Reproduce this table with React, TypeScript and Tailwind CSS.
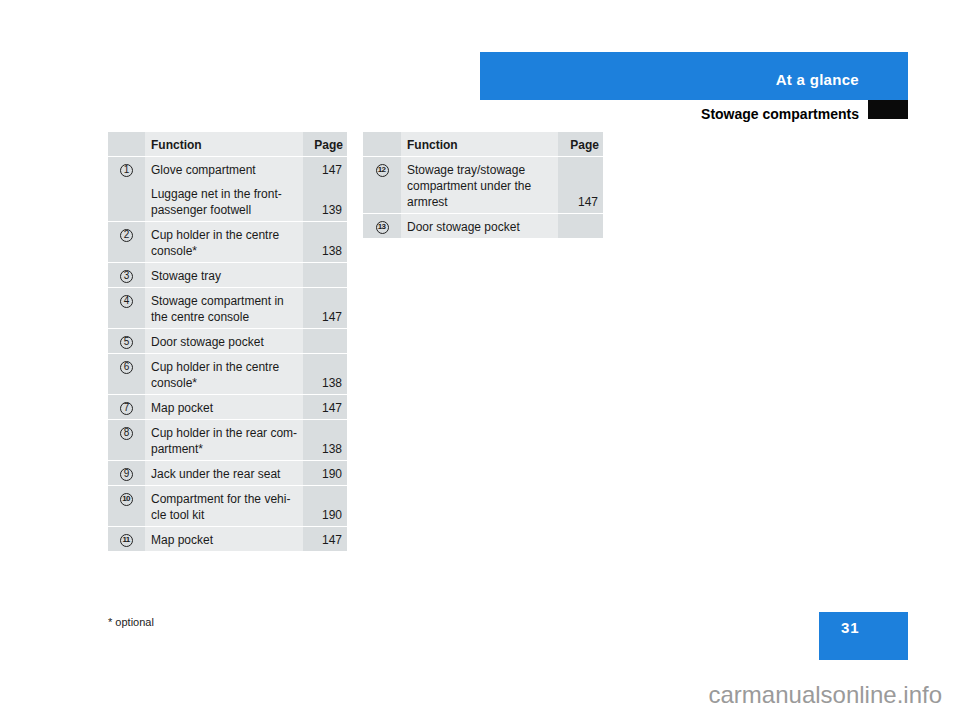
import React from "react";

type Entry = { text: string[]; page?: string };
type Row = { n: string; entries: Entry[] };

const left: Row[] = [
  { n: "1", entries: [{ text: ["Glove compartment"], page: "147" }, { text: ["Luggage net in the front-", "passenger footwell"], page: "139" }] },
  { n: "2", entries: [{ text: ["Cup holder in the centre", "console*"], page: "138" }] },
  { n: "3", entries: [{ text: ["Stowage tray"] }] },
  { n: "4", entries: [{ text: ["Stowage compartment in", "the centre console"], page: "147" }] },
  { n: "5", entries: [{ text: ["Door stowage pocket"] }] },
  { n: "6", entries: [{ text: ["Cup holder in the centre", "console*"], page: "138" }] },
  { n: "7", entries: [{ text: ["Map pocket"], page: "147" }] },
  { n: "8", entries: [{ text: ["Cup holder in the rear com-", "partment*"], page: "138" }] },
  { n: "9", entries: [{ text: ["Jack under the rear seat"], page: "190" }] },
  { n: "10", entries: [{ text: ["Compartment for the vehi-", "cle tool kit"], page: "190" }] },
  { n: "11", entries: [{ text: ["Map pocket"], page: "147" }] },
];

const right: Row[] = [
  { n: "12", entries: [{ text: ["Stowage tray/stowage", "compartment under the", "armrest"], page: "147" }] },
  { n: "13", entries: [{ text: ["Door stowage pocket"] }] },
];

function Circle({ n }: { n: string }) {
  const two = n.length > 1;
  return (
    <div className="w-[13px] h-[13px] rounded-full border border-[#222] flex items-center justify-center">
      <span className={two ? "text-[8px] leading-none tracking-[-0.8px] pr-[1px] font-bold" : "text-[10px] leading-none"}>{n}</span>
    </div>
  );
}

function Table({ rows, w }: { rows: Row[]; w: [string, string] }) {
  const [nw, pw] = w;
  return (
    <div className="flex flex-col gap-[1px] bg-white">
      <div className="flex h-[24px]">
        <div className={`${nw} bg-[#d9dddf]`} />
        <div className="flex-1 bg-[#e9ebec] pl-[6px] pt-[5px] leading-[16px] font-bold">Function</div>
        <div className={`${pw} bg-[#d9dddf] pr-[4px] pt-[5px] leading-[16px] text-right font-bold`}>Page</div>
      </div>
      {rows.map((r) => (
        <div key={r.n} className="flex">
          <div className={`${nw} bg-[#d9dddf] pt-[5px] flex justify-center`}>
            <div className="h-[16px] flex items-center">
              <Circle n={r.n} />
            </div>
          </div>
          <div className="flex-1 flex flex-col">
            {r.entries.map((e, i) => (
              <div key={i} className="flex flex-1">
                <div className={`flex-1 bg-[#e9ebec] pl-[6px] ${i === 0 ? "pt-[5px]" : "pt-[8px]"} ${i === r.entries.length - 1 ? "pb-[3px]" : ""}`}>
                  {e.text.map((t, j) => (
                    <div key={j} className="leading-[16px] whitespace-nowrap">{t}</div>
                  ))}
                </div>
                <div className={`${pw} bg-[#d9dddf] pr-[5px] flex items-end justify-end ${i === r.entries.length - 1 ? "pb-[3px]" : ""}`}>
                  <div className="leading-[16px]">{e.page ?? ""}</div>
                </div>
              </div>
            ))}
          </div>
        </div>
      ))}
    </div>
  );
}

export default function App() {
  return (
    <div className="w-[960px] h-[712px] bg-white overflow-hidden flex flex-col font-['Liberation_Sans',Arial,sans-serif] text-[#1a1a1a]">
      <div className="pt-[52px] pl-[480px]">
        <div className="w-[428px] h-[48px] bg-[#1d80dc] flex items-center justify-end pr-[49px] pt-[8px] text-white font-bold text-[15px] tracking-[0.3px]">
          At a glance
        </div>
      </div>
      <div className="flex justify-end items-start pr-[52px] h-[24px]">
        <div className="text-[14px] font-bold leading-[19px] pt-[5px] text-black">Stowage compartments</div>
        <div className="w-[40px] h-[19px] bg-[#0a0a0a] ml-[9px]" />
      </div>
      <div className="h-[488px] pt-[8px] pl-[108px] flex items-start gap-[16px] text-[12px]">
        <div className="w-[239px]">
          <Table rows={left} w={["w-[37px]", "w-[44px]"]} />
        </div>
        <div className="w-[240px]">
          <Table rows={right} w={["w-[38px]", "w-[45px]"]} />
        </div>
      </div>
      <div className="flex items-start h-[48px]">
        <div className="pl-[108px] pt-[3px] text-[11px] leading-[14px] text-[#222]">* optional</div>
        <div className="flex-1" />
        <div className="w-[89px] h-[48px] bg-[#1d80dc] mr-[52px] pl-[22px] pt-[7px] text-white text-[15px] font-bold leading-[18px] tracking-[1px]">
          31
        </div>
      </div>
      <div className="flex-1 flex justify-end items-start pr-[18px] pt-[22px]">
        <div className="text-[24px] leading-[26px] text-[#9a9a9a]">carmanualsonline.info</div>
      </div>
    </div>
  );
}
